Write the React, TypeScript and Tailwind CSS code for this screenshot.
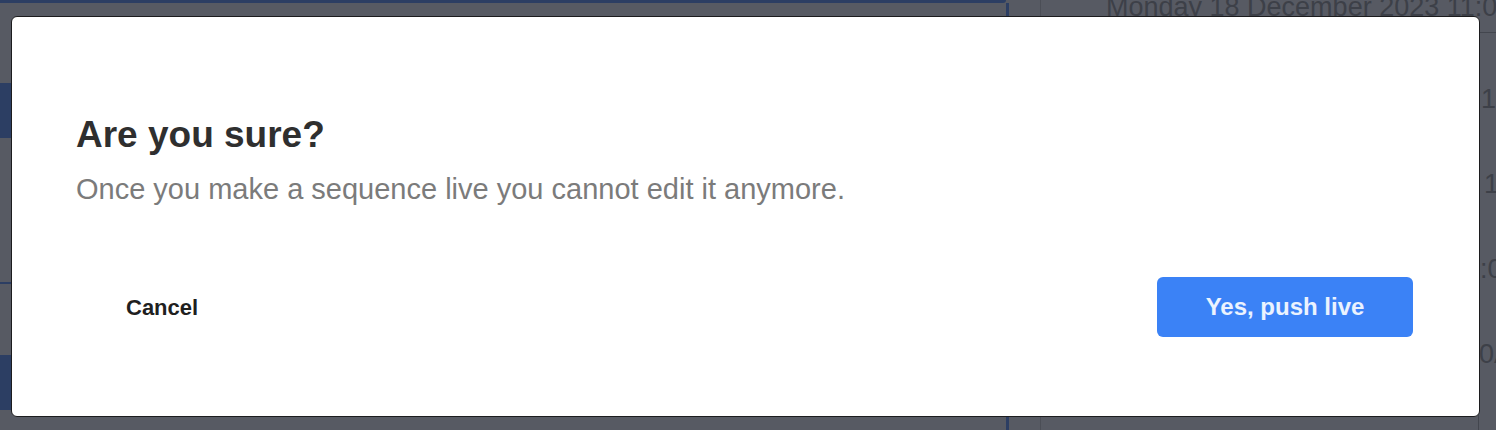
import React from "react";

export default function App() {
  const font = { fontFamily: '"Liberation Sans", Arial, Helvetica, sans-serif' };
  return (
    <div
      className="relative w-[1496px] h-[430px] overflow-hidden bg-[#575a63] flex"
      style={font}
    >
      {/* dimmed page underneath */}
      <div className="w-[1041px] h-full border-r border-[#4b4e56] flex flex-col shrink-0">
        <div className="h-[3px] w-[1006px] bg-[#2c3e63] rounded-br-[3px]" />
        <div className="flex flex-1">
          <div className="w-[11px] flex flex-col">
            <div className="mt-[80px] h-[55px] bg-[#2c3e63]" />
            <div className="mt-[144px] h-[2px] bg-[#2c3e63]" />
            <div className="mt-[71px] h-[55px] bg-[#2c3e63]" />
          </div>
          <div className="flex-1" />
          <div className="w-[3px] bg-[#2c3e63] mr-[31px]" />
        </div>
      </div>
      <div className="flex-1 flex flex-col min-w-0 text-[#3d4048] text-[27px] leading-none whitespace-nowrap">
        <div className="pl-[65px] mt-[-6px] h-[38px]">Monday 18 December 2023 11:00</div>
        <div className="ml-[437px] flex-1 border-t border-l border-[#43464e] flex flex-col">
          <div className="mt-[53px] pl-[2px]">1:00</div>
          <div className="mt-[58px] pl-[5px]">1</div>
          <div className="mt-[58px] pl-[1px]">:00</div>
          <div className="mt-[58px] pl-[0px]">0AM</div>
        </div>
      </div>

      {/* modal */}
      <div className="absolute left-[11px] top-[16px] w-[1469px] h-[401px] bg-white rounded-[6px] border border-[#1c1c1e] flex flex-col px-[64px] pt-[96px]">
        <h2 className="text-[37px] leading-[44px] font-bold text-[#2f2f2f]">Are you sure?</h2>
        <p className="mt-[15px] text-[29px] leading-[35px] text-[#7b7b7b]">
          Once you make a sequence live you cannot edit it anymore.
        </p>
        <div className="mt-[70px] flex items-center justify-between">
          <button className="h-[60px] pl-[50px] pr-[30px] text-[22px] font-semibold text-[#1f1f1f]">
            Cancel
          </button>
          <button className="mr-[2px] w-[256px] h-[60px] rounded-[6px] bg-[#3b82f6] text-[24px] font-bold text-white/90">
            Yes, push live
          </button>
        </div>
      </div>
    </div>
  );
}
